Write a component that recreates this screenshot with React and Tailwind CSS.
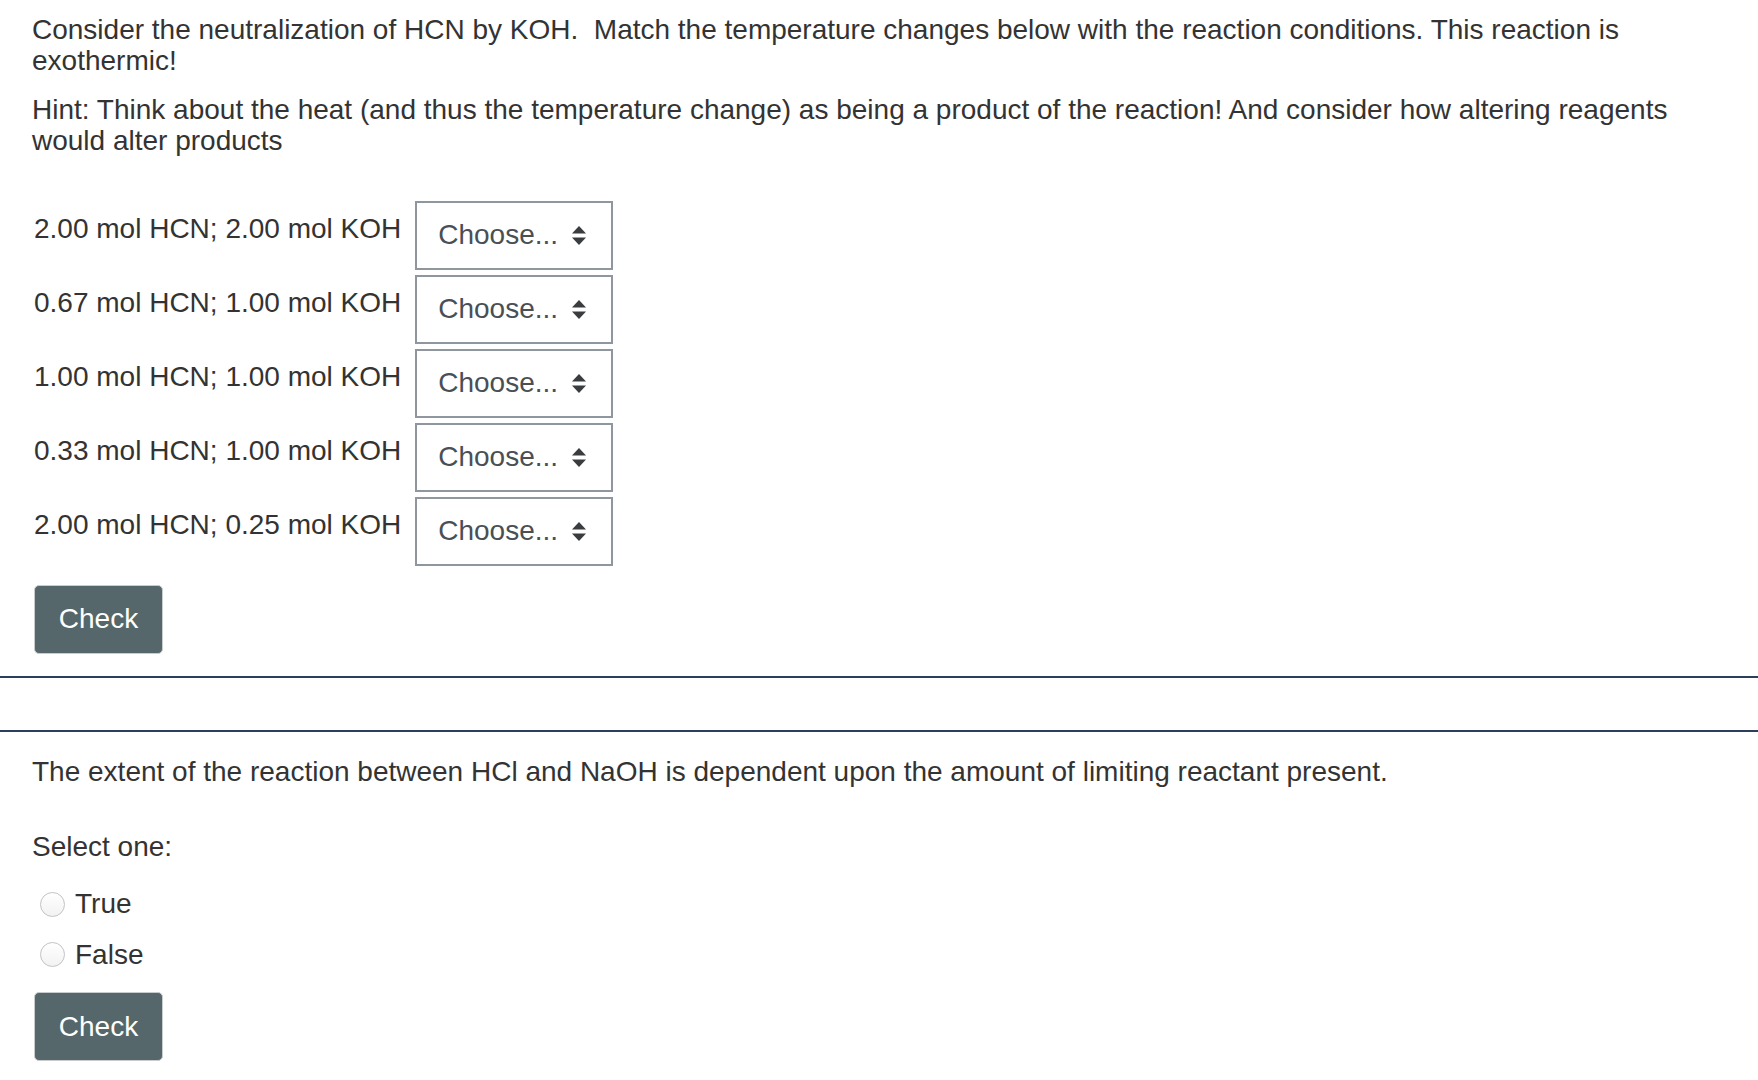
import React from "react";

function SortArrows() {
  return (
    <svg width="14" height="19" viewBox="0 0 14 19" className="shrink-0">
      <path d="M7 0 L14 7.5 L0 7.5 Z" fill="#3a3d40" />
      <path d="M7 19 L14 11.5 L0 11.5 Z" fill="#3a3d40" />
    </svg>
  );
}

function Choose() {
  return (
    <div className="flex h-[69px] w-[198px] items-center justify-between border-2 border-[#8f969e] bg-white pl-[21px] pr-[25px] text-[#4a4f54]">
      <span>Choose...</span>
      <SortArrows />
    </div>
  );
}

function CheckButton() {
  return (
    <button className="ml-[2px] flex h-[69px] w-[129px] items-center justify-center rounded-[5px] border border-[#c9cccd] bg-[#56676b] text-white">
      Check
    </button>
  );
}

function Radio({ label }) {
  return (
    <div className="flex items-center gap-[10px] pl-[8px]">
      <span className="block h-[25px] w-[25px] rounded-full border border-[#c3c3c3] bg-gradient-to-b from-white to-[#f2f2f2]" />
      <span>{label}</span>
    </div>
  );
}

export default function App() {
  const rows = [
    "2.00 mol HCN; 2.00 mol KOH",
    "0.67 mol HCN; 1.00 mol KOH",
    "1.00 mol HCN; 1.00 mol KOH",
    "0.33 mol HCN; 1.00 mol KOH",
    "2.00 mol HCN; 0.25 mol KOH",
  ];
  return (
    <div className="min-h-screen bg-white font-['Liberation_Sans',Arial,sans-serif] text-[28px] leading-[31.4px] text-[#333]">
      <section className="pl-[32px] pr-[31px] pt-[14px] pb-[22px]">
        <p>
          Consider the neutralization of HCN by KOH.&nbsp; Match the temperature changes below with the reaction
          conditions. This reaction is exothermic!
        </p>
        <p className="mt-[17px]">
          Hint: Think about the heat (and thus the temperature change) as being a product of the reaction! And consider
          how altering reagents would alter products
        </p>
        <div className="mt-[44px] grid w-fit grid-cols-[auto_auto] gap-x-[14px] gap-y-[5px] pl-[2px]">
          {rows.map((r) => (
            <React.Fragment key={r}>
              <div className="pt-[12px]">{r}</div>
              <Choose />
            </React.Fragment>
          ))}
        </div>
        <div className="mt-[19px]">
          <CheckButton />
        </div>
      </section>
      <div className="h-[2px] bg-[#2c3d5e]" />
      <div className="h-[52px]" />
      <div className="h-[2px] bg-[#2c3d5e]" />
      <section className="pl-[32px] pr-[31px] pt-[24px] pb-[20px]">
        <p>The extent of the reaction between HCl and NaOH is dependent upon the amount of limiting reactant present.</p>
        <p className="mt-[44px]">Select one:</p>
        <div className="mt-[26px] flex flex-col gap-[19px]">
          <Radio label="True" />
          <Radio label="False" />
        </div>
        <div className="mt-[22px]">
          <CheckButton />
        </div>
      </section>
    </div>
  );
}
